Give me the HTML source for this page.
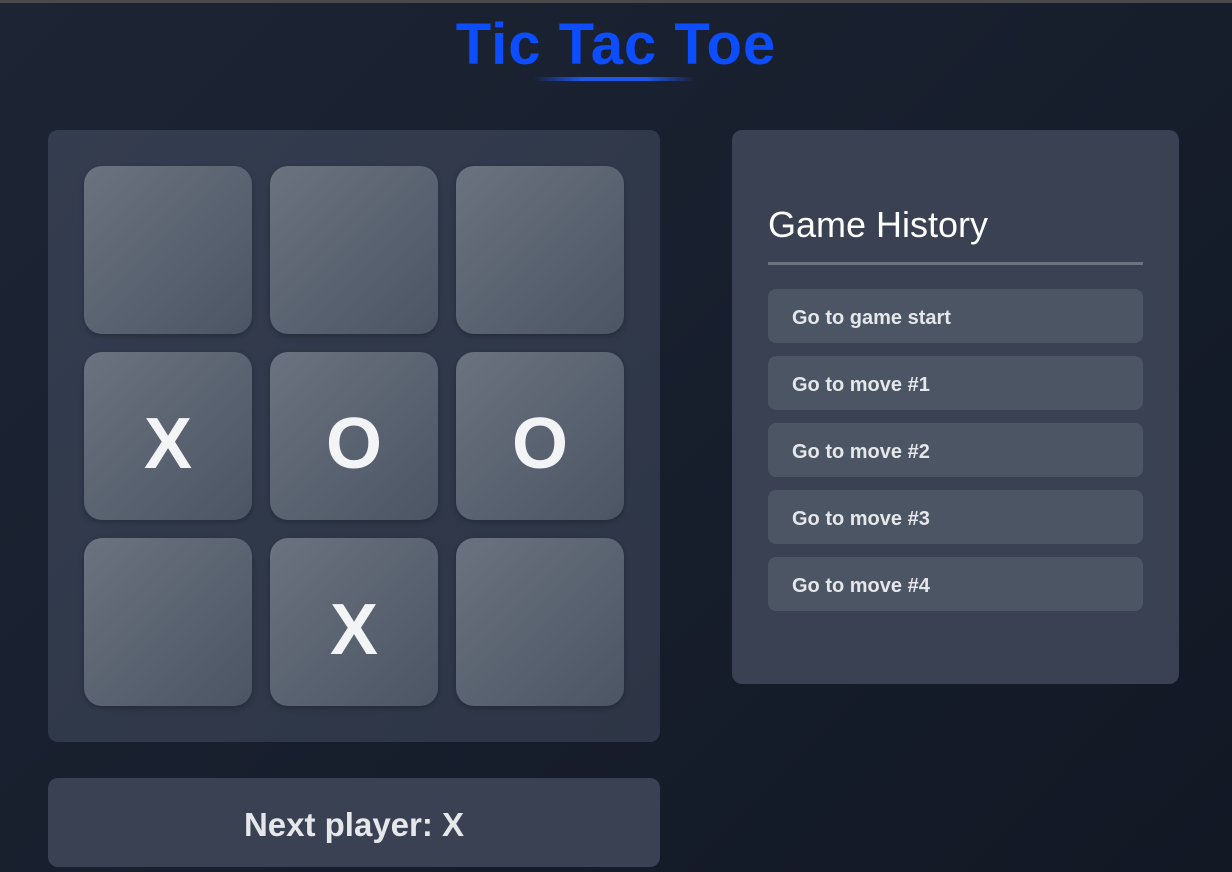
<!DOCTYPE html>
<html><head><meta charset="utf-8"><style>
*{margin:0;padding:0;box-sizing:border-box}
html,body{width:1232px;height:872px;overflow:hidden}
body{background:linear-gradient(135deg,#1d2535 0%,#161d2b 60%,#121824 100%);font-family:"Liberation Sans",sans-serif;position:relative}
.top{position:absolute;left:0;top:0;width:1232px;height:3px;background:#4a4a4c}
h1{position:absolute;top:11px;left:0;width:1232px;text-align:center;color:#0b4dff;font-size:58px;font-weight:bold;letter-spacing:1px}
.ul{position:absolute;left:533px;top:77px;width:162px;height:4px;background:linear-gradient(90deg,transparent,#1d56e8 30%,#1d56e8 70%,transparent);border-radius:2px}
.board{position:absolute;left:48px;top:130px;width:612px;height:612px;background:linear-gradient(135deg,#343d4f,#2d3546);border-radius:10px}
.cell{position:absolute;width:168px;height:168px;border-radius:18px;background:linear-gradient(135deg,#6b7280,#4b5563);box-shadow:0 2px 6px rgba(0,0,0,.25);color:#f3f4f6;font-weight:bold;font-size:72px;text-align:center;line-height:184px}
.hist{position:absolute;left:732px;top:130px;width:447px;height:554px;background:#394152;border-radius:10px}
.hist h2{position:absolute;left:36px;top:74px;color:#fff;font-weight:normal;font-size:36px}
.hist .line{position:absolute;left:36px;top:132px;width:375px;height:3px;background:#6b7280}
.btn{position:absolute;left:36px;width:375px;height:54px;background:#4b5563;border-radius:8px;color:#e5e7eb;font-size:20px;font-weight:bold;padding-left:24px;line-height:58px}
.next{position:absolute;left:48px;top:778px;width:612px;height:89px;background:#394152;border-radius:10px;color:#e5e7eb;font-size:33px;font-weight:bold;text-align:center;line-height:94px}
</style></head><body>
<div class="top"></div>
<h1>Tic Tac Toe</h1><div class="ul"></div>
<div class="board">
<div class="cell" style="left:36px;top:36px"></div>
<div class="cell" style="left:222px;top:36px"></div>
<div class="cell" style="left:408px;top:36px"></div>
<div class="cell" style="left:36px;top:222px">X</div>
<div class="cell" style="left:222px;top:222px">O</div>
<div class="cell" style="left:408px;top:222px">O</div>
<div class="cell" style="left:36px;top:408px"></div>
<div class="cell" style="left:222px;top:408px">X</div>
<div class="cell" style="left:408px;top:408px"></div>
</div>
<div class="hist">
<h2>Game History</h2><div class="line"></div>
<div class="btn" style="top:159px">Go to game start</div>
<div class="btn" style="top:226px">Go to move #1</div>
<div class="btn" style="top:293px">Go to move #2</div>
<div class="btn" style="top:360px">Go to move #3</div>
<div class="btn" style="top:427px">Go to move #4</div>
</div>
<div class="next">Next player: X</div>
</body></html>
